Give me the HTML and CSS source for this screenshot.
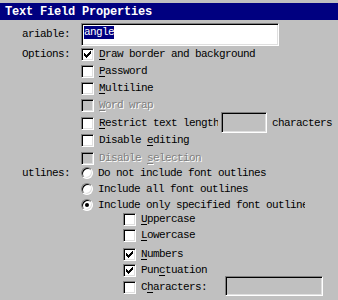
FILE: index.html
```html
<!DOCTYPE html>
<html>
<head>
<meta charset="utf-8">
<link rel="stylesheet" href="styles.css">
</head>
<body>
<div class="window">
  <div class="titlebar">Text Field Properties</div>
  <div class="form">
    <div class="field var-field">
      <div class="lbl">ariable:</div>
      <div class="textbox"><span class="sel">angle</span></div>
    </div>
    <div class="field">
      <div class="lbl">Options:</div>
      <div class="group">
        <div class="row"><span class="cb"><svg class="check" width="7" height="7" viewBox="0 0 7 7"><path d="M0 2h1v3H0zM1 3h1v3H1zM2 4h1v3H2zM3 3h1v3H3zM4 2h1v3H4zM5 1h1v3H5zM6 0h1v3H6z"/></svg></span><span class="txt"><u>D</u>raw border and background</span></div>
        <div class="row"><span class="cb"></span><span class="txt"><u>P</u>assword</span></div>
        <div class="row"><span class="cb"></span><span class="txt"><u>M</u>ultiline</span></div>
        <div class="row tall"><span class="cb off"></span><span class="txt dis"><u>W</u>ord wrap</span></div>
        <div class="row"><span class="cb"></span><span class="txt clip-restrict"><u>R</u>estrict text length</span><span class="minibox small"></span><span class="txt after">characters</span></div>
        <div class="row tall"><span class="cb"></span><span class="txt">Disable <u>e</u>diting</span></div>
        <div class="row short"><span class="cb off"></span><span class="txt dis">Disable <u>s</u>election</span></div>
      </div>
    </div>
    <div class="field">
      <div class="lbl">utlines:</div>
      <div class="group">
        <div class="row radio-row"><span class="rb"></span><span class="txt">Do not include font outlines</span></div>
        <div class="row radio-row"><span class="rb"></span><span class="txt">Include all font outlines</span></div>
        <div class="row radio-row last"><span class="rb on"></span><span class="txt clip-only">Include only specified font outlines</span></div>
        <div class="sub">
          <div class="row sub-row"><span class="cb"></span><span class="txt"><u>U</u>ppercase</span></div>
          <div class="row sub-row lower"><span class="cb"></span><span class="txt"><u>L</u>owercase</span></div>
          <div class="row sub-row"><span class="cb"><svg class="check" width="7" height="7" viewBox="0 0 7 7"><path d="M0 2h1v3H0zM1 3h1v3H1zM2 4h1v3H2zM3 3h1v3H3zM4 2h1v3H4zM5 1h1v3H5zM6 0h1v3H6z"/></svg></span><span class="txt"><u>N</u>umbers</span></div>
          <div class="row"><span class="cb"><svg class="check" width="7" height="7" viewBox="0 0 7 7"><path d="M0 2h1v3H0zM1 3h1v3H1zM2 4h1v3H2zM3 3h1v3H3zM4 2h1v3H4zM5 1h1v3H5zM6 0h1v3H6z"/></svg></span><span class="txt">Pun<u>c</u>tuation</span></div>
          <div class="row"><span class="cb"></span><span class="txt chars-lbl">C<u>h</u>aracters:</span><span class="minibox wide"></span></div>
        </div>
      </div>
    </div>
  </div>
</div>
</body>
</html>
```
FILE: styles.css
```css
html, body {
  margin: 0;
  padding: 0;
  background: #c0c0c0;
  width: 338px;
  height: 300px;
  overflow: hidden;
}

.window {
  padding-top: 3px;
  font-family: "Liberation Mono", monospace;
  font-size: 11px;
  letter-spacing: -0.6px;
  color: #000;
}

.titlebar {
  height: 17px;
  box-sizing: border-box;
  background: #000080;
  color: #fff;
  font-weight: bold;
  font-size: 12px;
  letter-spacing: -0.2px;
  line-height: 15px;
  padding: 2px 0 0 5px;
  white-space: nowrap;
}

.form {
  padding-top: 3px;
  display: flex;
  flex-direction: column;
}

.field {
  display: grid;
  grid-template-columns: 70px 1fr;
  column-gap: 11px;
}

.var-field {
  align-items: center;
  margin-bottom: 2px;
}

.lbl {
  text-align: right;
  line-height: 13px;
  white-space: nowrap;
}

.textbox {
  width: 198px;
  height: 23px;
  box-sizing: border-box;
  background: #fff;
  border: 1px solid;
  border-color: #808080 #fff #fff #808080;
  box-shadow: inset 1px 1px #000, inset -1px -1px #dfdfdf;
  padding: 2px 2px;
  display: flex;
  align-items: flex-start;
}

.sel {
  background: #000080;
  color: #fff;
  line-height: 13px;
}

.group {
  display: flex;
  flex-direction: column;
}

.row {
  display: flex;
  align-items: flex-start;
  height: 17px;
  white-space: nowrap;
}

.row.tall { height: 18px; }
.row.short { height: 15px; }
.radio-row { height: 16px; }
.radio-row.last { height: 14px; }
.sub-row { height: 16px; }
.sub-row.lower { height: 19px; }

.txt {
  line-height: 13px;
  margin-left: 5px;
}

.txt u {
  text-underline-offset: 2px;
}

.dis {
  color: #808080;
  text-shadow: 1px 1px 0 #fff;
}

.cb {
  flex: none;
  width: 13px;
  height: 13px;
  box-sizing: border-box;
  background: #fff;
  border: 1px solid;
  border-color: #808080 #fff #fff #808080;
  box-shadow: inset 1px 1px #000, inset -1px -1px #dfdfdf;
  display: flex;
  padding: 2px 0 0 2px;
}

.cb.off {
  background: #c0c0c0;
}

.check {
  display: block;
  shape-rendering: crispEdges;
  fill: #000;
}

.rb {
  flex: none;
  width: 12px;
  height: 12px;
  box-sizing: border-box;
  border-radius: 50%;
  background: #fff;
  border: 1px solid;
  border-color: #808080 #fff #fff #808080;
  box-shadow: inset 1px 1px #000, inset -1px -1px #dfdfdf;
  display: flex;
  align-items: center;
  justify-content: center;
}

.rb.on::after {
  content: "";
  width: 4px;
  height: 4px;
  border-radius: 50%;
  background: #000;
}

.radio-row .txt { line-height: 12px; }

.clip-restrict {
  width: 119px;
  overflow: hidden;
}

.clip-only {
  width: 207px;
  overflow: hidden;
}

.minibox {
  flex: none;
  box-sizing: border-box;
  background: #c0c0c0;
  border: 1px solid;
  border-color: #808080 #fff #fff #808080;
  box-shadow: inset 1px 1px #000, inset -1px -1px #dfdfdf;
  margin-top: -5px;
}

.minibox.small {
  width: 46px;
  height: 21px;
  margin-left: 3px;
}

.minibox.wide {
  width: 98px;
  height: 20px;
}

.after {
  margin-left: 5px;
}

.sub {
  margin-left: 42px;
  display: flex;
  flex-direction: column;
}

.chars-lbl {
  width: 84px;
}
```
